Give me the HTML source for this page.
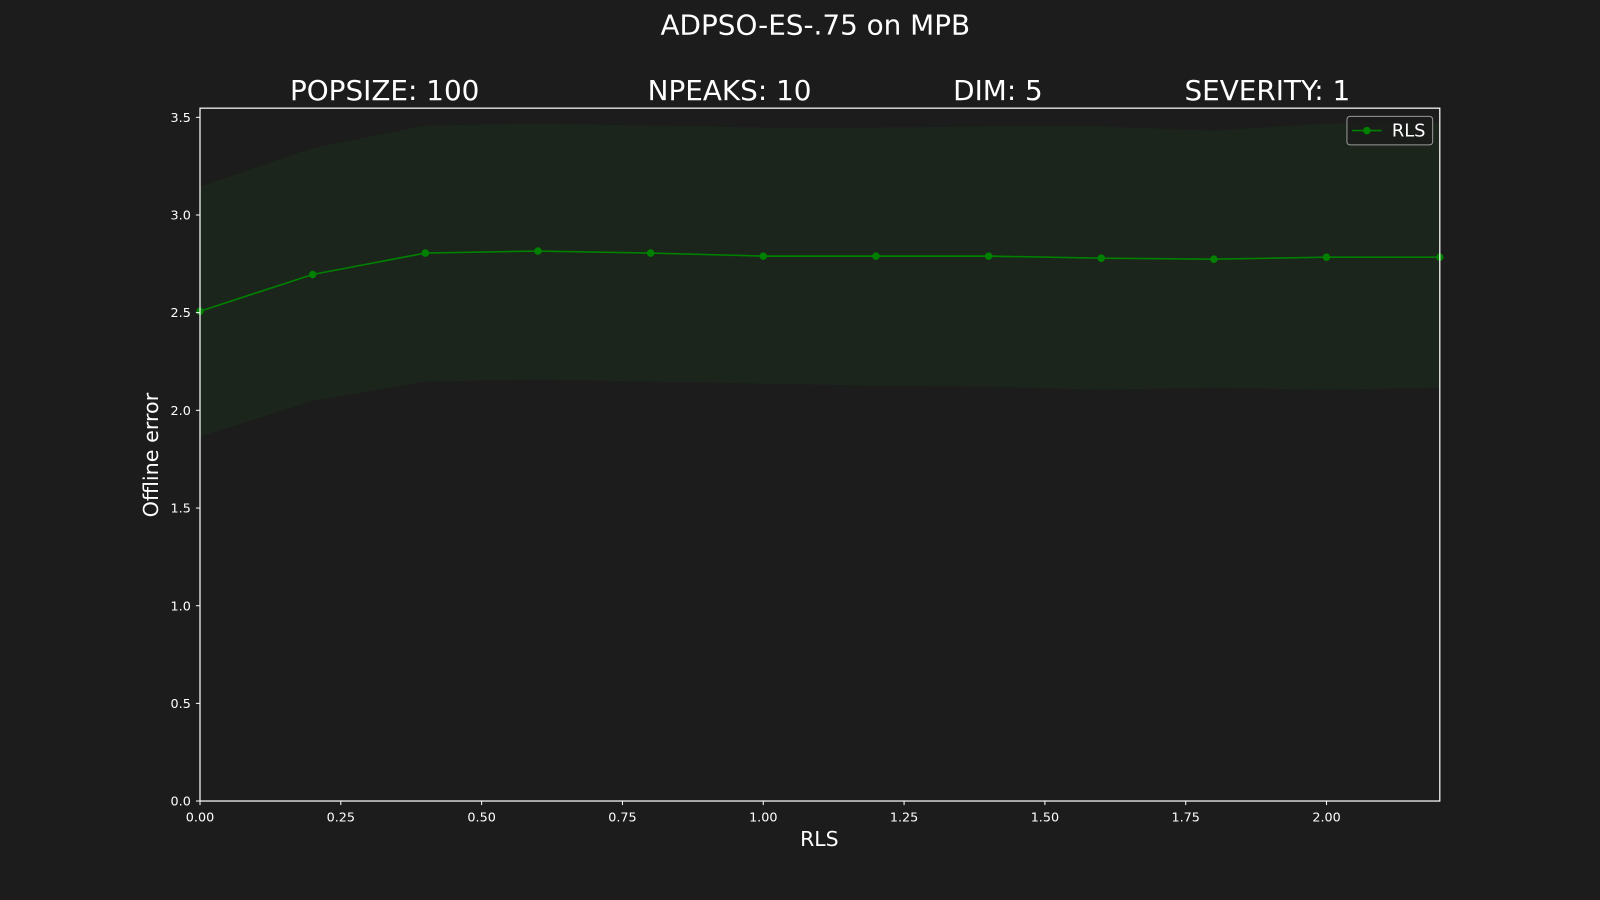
<!DOCTYPE html>
<html><head><meta charset="utf-8"><style>
html,body{margin:0;padding:0;background:#1c1c1c;width:1600px;height:900px;overflow:hidden}
svg{display:block}
text{font-family:"DejaVu Sans","Liberation Sans",sans-serif;fill:#ffffff}
</style></head><body>
<svg width="1600" height="900" viewBox="0 0 1568 882" preserveAspectRatio="none">
<rect width="1568" height="882" fill="#1c1c1c"/>
<text x="799" y="34" font-size="27.3" text-anchor="middle">ADPSO-ES-.75 on MPB</text>
<g font-size="27.3" text-anchor="middle">
<text x="377" y="98">POPSIZE: 100</text>
<text x="715" y="98">NPEAKS: 10</text>
<text x="978" y="98">DIM: 5</text>
<text x="1242" y="98">SEVERITY: 1</text>
</g>
<polygon fill="#1b251b" points="196,183 306.4,145 416.8,123 527.2,121 637.6,123 748,125 858.4,125 968.8,124 1079.2,124 1189.6,128 1300,121 1411,120 1411,380 1300,382 1189.6,380 1079.2,382 968.8,379 858.4,378 748,376 637.6,374 527.2,372 416.8,374 306.4,393 196,428"/>
<polyline fill="none" stroke="#008000" stroke-width="1.6" points="196,305 306.4,269 416.8,248 527.2,246 637.6,248 748,251 858.4,251 968.8,251 1079.2,253 1189.6,254 1300,252 1411,252"/>
<g fill="#008000">
<circle cx="196" cy="305" r="3.7"/><circle cx="306.4" cy="269" r="3.7"/><circle cx="416.8" cy="248" r="3.7"/><circle cx="527.2" cy="246" r="3.7"/><circle cx="637.6" cy="248" r="3.7"/><circle cx="748" cy="251" r="3.7"/><circle cx="858.4" cy="251" r="3.7"/><circle cx="968.8" cy="251" r="3.7"/><circle cx="1079.2" cy="253" r="3.7"/><circle cx="1189.6" cy="254" r="3.7"/><circle cx="1300" cy="252" r="3.7"/><circle cx="1411" cy="252" r="3.7"/>
</g>
<rect x="196" y="106" width="1215" height="679" fill="none" stroke="#ffffff" stroke-width="1.2"/>
<g stroke="#fff" stroke-width="1">
<line x1="192" x2="196" y1="785" y2="785"/><line x1="192" x2="196" y1="689.3" y2="689.3"/><line x1="192" x2="196" y1="593.6" y2="593.6"/><line x1="192" x2="196" y1="497.9" y2="497.9"/><line x1="192" x2="196" y1="402.1" y2="402.1"/><line x1="192" x2="196" y1="306.4" y2="306.4"/><line x1="192" x2="196" y1="210.7" y2="210.7"/><line x1="192" x2="196" y1="115" y2="115"/>
<line y1="785" y2="789" x1="196" x2="196"/><line y1="785" y2="789" x1="334" x2="334"/><line y1="785" y2="789" x1="472" x2="472"/><line y1="785" y2="789" x1="610" x2="610"/><line y1="785" y2="789" x1="748" x2="748"/><line y1="785" y2="789" x1="886" x2="886"/><line y1="785" y2="789" x1="1024" x2="1024"/><line y1="785" y2="789" x1="1162" x2="1162"/><line y1="785" y2="789" x1="1300" x2="1300"/>
</g>
<g font-size="12.5" text-anchor="end">
<text x="187" y="789.5">0.0</text><text x="187" y="693.8">0.5</text><text x="187" y="598.1">1.0</text><text x="187" y="502.4">1.5</text><text x="187" y="406.6">2.0</text><text x="187" y="310.9">2.5</text><text x="187" y="215.2">3.0</text><text x="187" y="119.5">3.5</text>
</g>
<g font-size="12.5" text-anchor="middle">
<text x="196" y="805">0.00</text><text x="334" y="805">0.25</text><text x="472" y="805">0.50</text><text x="610" y="805">0.75</text><text x="748" y="805">1.00</text><text x="886" y="805">1.25</text><text x="1024" y="805">1.50</text><text x="1162" y="805">1.75</text><text x="1300" y="805">2.00</text>
</g>
<text x="803" y="829" font-size="20" text-anchor="middle">RLS</text>
<text transform="translate(155,446) rotate(-90)" font-size="20.3" text-anchor="middle">Offline error</text>
<rect x="1320" y="114" width="84" height="28" rx="3" fill="#1c1c1c" fill-opacity="0.8" stroke="#999" stroke-width="1"/>
<line x1="1325" x2="1354" y1="128" y2="128" stroke="#008000" stroke-width="1.6"/>
<circle cx="1339.5" cy="128" r="3.7" fill="#008000"/>
<text x="1364" y="134" font-size="17.5">RLS</text>
</svg>
</body></html>
